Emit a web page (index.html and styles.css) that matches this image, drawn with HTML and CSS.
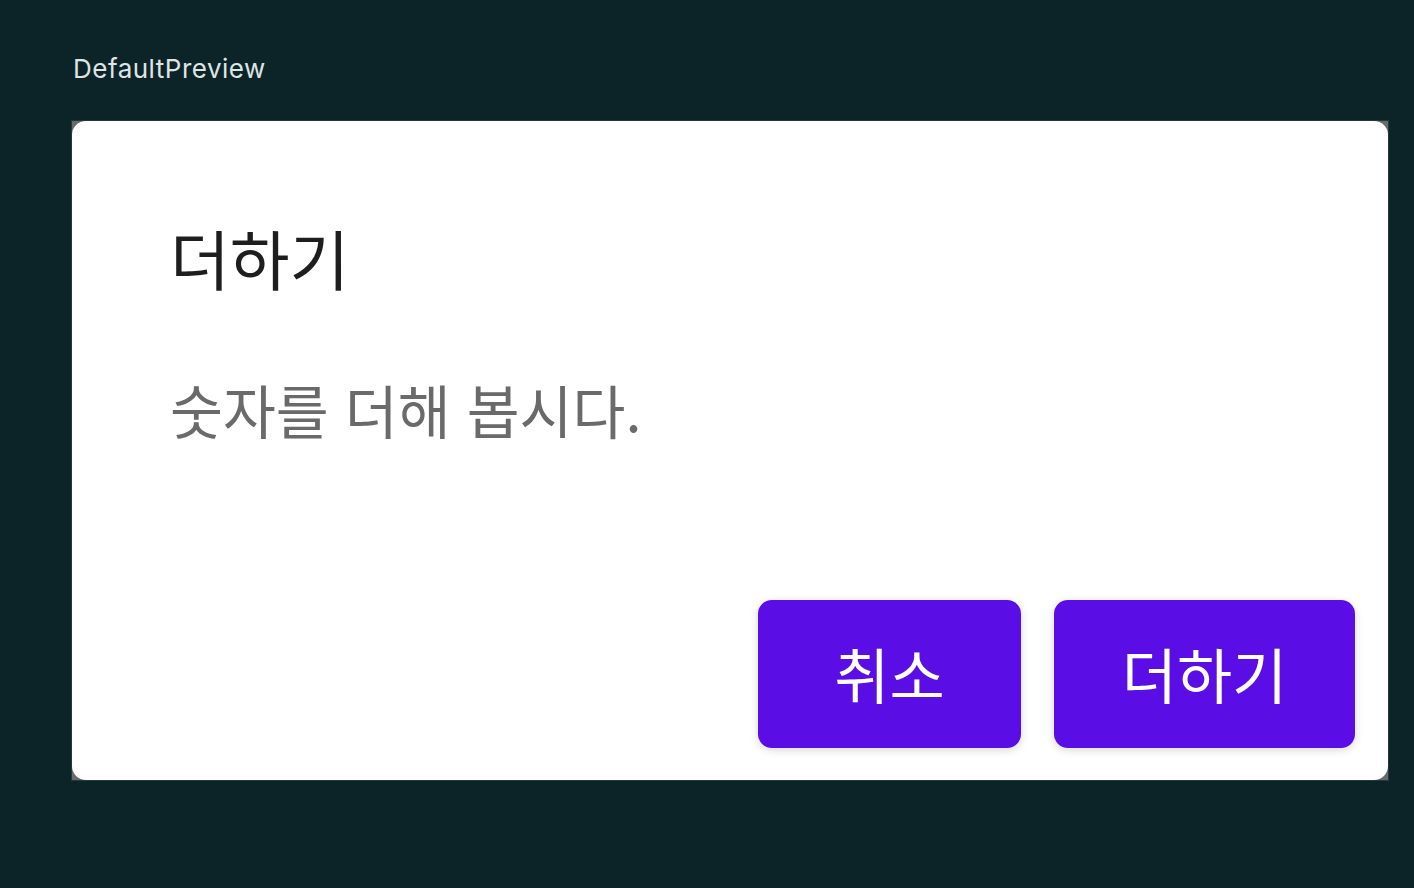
FILE: index.html
```html
<!DOCTYPE html>
<html lang="ko">
<head>
<meta charset="utf-8">
<link rel="stylesheet" href="styles.css">
</head>
<body>
<div class="label">DefaultPreview</div>
<div class="frame">
  <div class="dialog">
    <h1 class="title">더하기</h1>
    <p class="message">숫자를 더해 봅시다.</p>
    <div class="actions">
      <button class="btn btn-cancel">취소</button>
      <button class="btn btn-add">더하기</button>
    </div>
  </div>
</div>
</body>
</html>
```
FILE: styles.css
```css
html, body {
  margin: 0;
  padding: 0;
  background: #0c2427;
  width: 1414px;
  height: 888px;
  overflow: hidden;
}
body {
  font-family: "Noto Sans CJK KR", "Noto Sans", sans-serif;
}
.label {
  font-family: Inter, "Noto Sans", sans-serif;
  font-size: 26px;
  letter-spacing: 0.5px;
  color: #dfe5e5;
  padding: 54px 0 0 73px;
  line-height: 30px;
  height: 66px;
}
.frame {
  margin-left: 71px;
  width: 1316px;
  height: 659px;
  border: 1px solid #1f3b3d;
  background: #6a6a6a;
}
.dialog {
  width: 100%;
  height: 100%;
  background: #fff;
  border-radius: 14px;
  box-sizing: border-box;
  padding: 0 33px 32px 98px;
  display: flex;
  flex-direction: column;
}
.title {
  margin: 101px 0 0 0;
  font-size: 65px;
  font-weight: 400;
  line-height: 70px;
  color: #1e1e1e;
}
.message {
  margin: 85px 0 0 0;
  font-size: 57.5px;
  line-height: 64px;
  color: #6a6a6a;
}
.actions {
  margin-top: auto;
  display: flex;
  justify-content: flex-end;
  gap: 33px;
}
.btn {
  font-family: "Noto Sans CJK KR", sans-serif;
  font-size: 60px;
  color: #fff;
  background: #5a0ee5;
  border: none;
  border-radius: 14px;
  height: 148px;
  padding: 0 0 4px 0;
  display: flex;
  align-items: center;
  justify-content: center;
  box-shadow: 0 2px 8px rgba(0,0,0,0.16);
}
.btn-cancel { width: 263px; }
.btn-add { width: 301px; }
```
